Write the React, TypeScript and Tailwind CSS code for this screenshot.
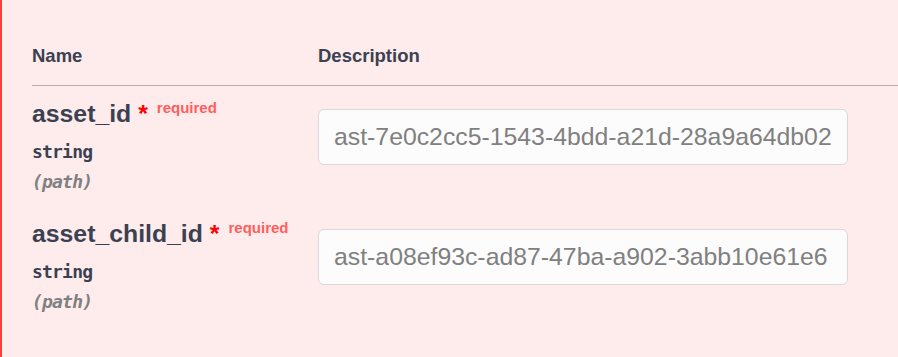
import React from "react";

const params = [
  { name: "asset_id", value: "ast-7e0c2cc5-1543-4bdd-a21d-28a9a64db02" },
  { name: "asset_child_id", value: "ast-a08ef93c-ad87-47ba-a902-3abb10e61e6" },
];

export default function App() {
  return (
    <div
      className="min-h-screen w-full bg-[#feecec] border-l-2 border-[#f93e3e] pl-[30px] overflow-hidden"
      style={{ fontFamily: '"Liberation Sans", Arial, sans-serif' }}
    >
      <div className="w-[1200px]">
        <div className="grid grid-cols-[286px_1fr] pt-[44px] pb-[17px] border-b border-[#bcaaad] text-[18.5px] leading-[24px] font-bold text-[#3b4151]">
          <div>Name</div>
          <div>Description</div>
        </div>
        {params.map((p) => (
          <div key={p.name} className="grid grid-cols-[286px_1fr] h-[120px]">
            <div className="pt-[13px]">
              <div className="text-[24.8px] leading-[30px] font-bold text-[#3b4151] whitespace-nowrap">
                {p.name}
                <span className="text-[#ff0000]">{"\u00a0*"}</span>
                <span className="relative -top-[9px] pl-[9px] text-[15px] font-bold text-[#ff5e5e]">
                  required
                </span>
              </div>
              <div
                className="mt-[5px] text-[18px] tracking-[-0.8px] leading-[30px] font-bold text-[#3b4151]"
                style={{ fontFamily: '"DejaVu Sans Mono", monospace' }}
              >
                string
              </div>
              <div
                className="text-[18px] tracking-[-0.8px] leading-[30px] font-bold italic text-[#808080]"
                style={{ fontFamily: '"DejaVu Sans Mono", monospace' }}
              >
                (path)
              </div>
            </div>
            <div className="pt-[23px]">
              <input
                type="text"
                readOnly
                value={p.value}
                className="block w-[530px] h-[56px] px-[15px] bg-[#fcfcfc] border border-[#d9d9d9] rounded-[6px] text-[24.8px] text-[#808080] outline-none"
                style={{ fontFamily: '"Liberation Sans", Arial, sans-serif' }}
              />
            </div>
          </div>
        ))}
      </div>
    </div>
  );
}
